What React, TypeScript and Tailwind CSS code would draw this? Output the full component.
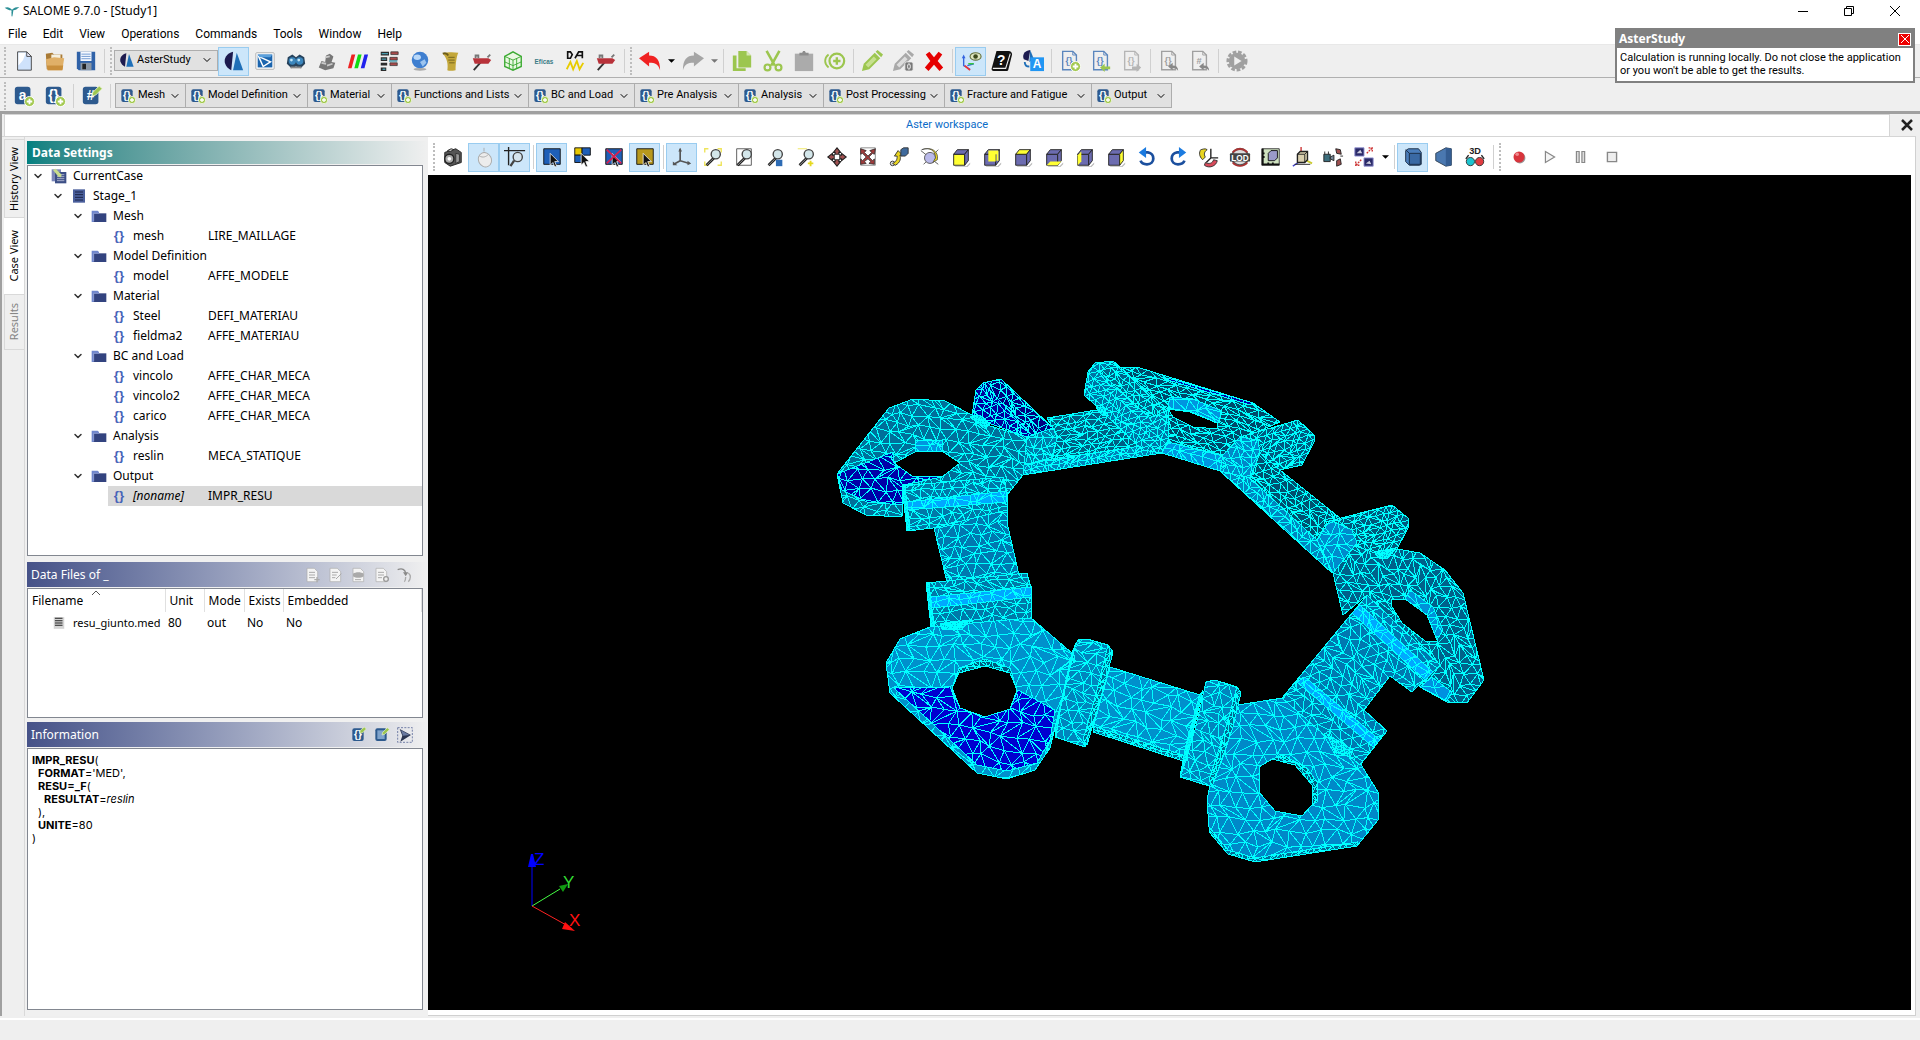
import type { ReactNode } from "react";
import { ChevronDown } from "lucide-react";

/* ---------- icons (24 x 24 drawings) ---------- */

const bold = { fontFamily: "Liberation Sans, sans-serif", fontWeight: 700 };

const glass = (
  <>
    <path d="M13 13L5 21" stroke="#222" strokeWidth="3" />
    <path d="M12 14L5 21" stroke="#999" strokeWidth="1" />
    <circle cx="15" cy="9" r="5" fill="#d3e6ea" stroke="#444" strokeWidth="1.5" />
  </>
);

const cursor = (
  <path d="M10 8v13l3-3 2 5 2-1-2-5h4z" fill="#111" stroke="#fff" strokeWidth="0.8" />
);

function cube(front: string, top: string, side: string, extra?: ReactNode) {
  return (
    <>
      <path d="M5 22h13l4-4v2l-3 3H6z" fill="#bbb" />
      <path d="M4 9h12v12H4z" fill={front} stroke="#222" />
      <path d="M4 9l4-5h12l-4 5z" fill={top} stroke="#222" />
      <path d="M16 9l4-5v12l-4 5z" fill={side} stroke="#222" />
      {extra}
    </>
  );
}

function sheet(color: string, label: string, extra: ReactNode) {
  return (
    <>
      <path d="M4 1.5h11l4 4v16H4z" fill="none" stroke={color} strokeWidth="1.5" />
      <path d="M15 1.5v4h4" fill="none" stroke={color} />
      <text x="11" y="15" fontSize="10" textAnchor="middle" fill={color} style={bold}>
        {label}
      </text>
      {extra}
    </>
  );
}

const plusBadge = (
  <>
    <circle cx="18" cy="18" r="5.5" fill="#a3c94f" stroke="#fff" />
    <path d="M18 15v6M15 18h6" stroke="#fff" strokeWidth="2" />
  </>
);

function badge(label: string, extra: ReactNode) {
  return (
    <>
      <rect x="2" y="2" width="17" height="19" rx="3" fill="#2d5a8e" />
      {label && (
        <text x="10.5" y="16" fontSize="15" textAnchor="middle" fill="#fff" style={bold}>
          {label}
        </text>
      )}
      {extra}
    </>
  );
}

const blueCube = "#6c6cb0";
const green = "#9cc64f";
const grey = "#a9a9a9";

const icons: Record<string, ReactNode> = {
  salome: (
    <>
      <path d="M1 7c5-2 8 0 11 3 3-3 6-4 11-4-3 3-6 5-9 5l-1 8-2-8C7 11 4 9 1 7z" fill="#2b8f96" />
      <path d="M12 13v7" stroke="#2b8f96" strokeWidth="1.5" />
    </>
  ),
  newFile: (
    <>
      <path d="M5 2h10l5 5v15H5z" fill="#cfe2fb" stroke="#444" />
      <path d="M6 3h8l-3 8-5 6z" fill="#fff" />
      <path d="M15 2v5h5z" fill="#eef" stroke="#444" />
    </>
  ),
  open: (
    <>
      <path d="M2 4l7-1 2 2h9v16H3z" fill="#a97a35" />
      <path d="M8 5h10v9H8z" fill="#f5f0e0" />
      <path d="M2 10l9-2 11 1-2 13H4z" fill="#e0b068" />
      <path d="M3 17h18l-1 5H4z" fill="#c98f3c" />
    </>
  ),
  save: (
    <>
      <path d="M2 2h20v20H4l-2-2z" fill="#2f62a8" />
      <path d="M6 2h12v10H6z" fill="#f4f8ff" />
      <path d="M7 4.500h10M7 7h10M7 9.500h10" stroke="#6b96d0" />
      <path d="M6 14h12v8H6z" fill="#8b97a5" />
      <path d="M8 15h4v6H8z" fill="#222" />
    </>
  ),
  aster: (
    <>
      <path d="M11 2C4 4 1 9 2 14c1 4 4 7 7 8z" fill="#1d1b4f" />
      <path d="M15 3l7 19H11z" fill="#1f6fb8" />
    </>
  ),
  paravis: (
    <>
      <rect x="2" y="3" width="20" height="18" rx="1" fill="#fff" stroke="#aaa" />
      <path d="M4 5h16v14H4z" fill="#1b64ad" />
      <path d="M5 7l13 6-8 5z" fill="none" stroke="#fff" strokeWidth="1.6" />
      <path d="M4 5h16l-2 3H6z" fill="#5ba0dc" />
    </>
  ),
  geom: (
    <>
      <path d="M3 8l5-3 4 3 4-3 5 3 1 7-5 5-5-2-5 2-5-5z" fill="#26425c" />
      <ellipse cx="8" cy="12" rx="4" ry="4" fill="#3b86bd" />
      <ellipse cx="16" cy="12" rx="4" ry="4" fill="#3b86bd" />
      <circle cx="7" cy="11" r="1.500" fill="#c2e6f8" />
      <circle cx="15" cy="11" r="1.500" fill="#c2e6f8" />
      <path d="M6 19h12" stroke="#888" strokeWidth="2" />
    </>
  ),
  shape: (
    <>
      <path d="M3 19l3-7 4 1 1-7 4-2 4 3-2 6 4 1-2 6-9 2z" fill="#777" />
      <path d="M6 14l5 1M10 8l5-1M12 17l6-2" stroke="#c9c9c9" strokeWidth="2" />
    </>
  ),
  stripes: (
    <>
      <path d="M5 5h4L5 20H1z" fill="#e22" />
      <path d="M12 5h4l-4 15H8z" fill="#1d1" />
      <path d="M19 5h4l-4 15h-4z" fill="#22e" />
    </>
  ),
  yacs: (
    <>
      <path d="M3 2h9v4H3zM3 8h7v4H3zM3 14h7v3H3zM3 19h6v4H3z" fill="#2b2b2b" />
      <path d="M14 2h8v3h-8zM13 8h8v3h-8zM13 14h8v3h-8z" fill="#a94a4a" stroke="#333" strokeWidth="0.800" />
      <path d="M4 4h7M12 12h9M4 10h5M5 21h3" stroke="#4a9cae" strokeWidth="1.500" />
    </>
  ),
  globe: (
    <>
      <circle cx="12" cy="11" r="9" fill="#3f7fd0" />
      <ellipse cx="9" cy="8" rx="4" ry="3" fill="#b9d8f8" />
      <path d="M12 13l5-3 2 4-4 4z" fill="#9cc4ef" />
      <ellipse cx="12" cy="21" rx="7" ry="1.500" fill="#aaa" />
    </>
  ),
  scroll: (
    <>
      <path d="M3 4c5-2 11-2 17-1-2 4-3 12-3 19-4 1-7 1-9 0 1-6 0-13-5-18z" fill="#c3a73a" />
      <path d="M9 8h7M9 11h7M10 14h6" stroke="#71601c" />
      <path d="M3 4c3-1 5 0 6 2" stroke="#6d5c18" fill="none" strokeWidth="2" />
    </>
  ),
  hammer: (
    <>
      <path d="M3 22l8-9" stroke="#333" strokeWidth="2" />
      <path d="M2 9h17l3 2-3 4H4z" fill="#b8323a" />
      <path d="M5 9V6h3v3M18 8l3-3" stroke="#777" strokeWidth="2" fill="none" />
    </>
  ),
  hexa: (
    <>
      <path d="M3 7l9-5 9 5v11l-9 4-9-4z" fill="#eaf8e2" stroke="#3caa32" strokeWidth="1.500" />
      <path d="M3 7l9 4 9-4M12 11v11M8 9v11M3 13l9 4 9-4M16 9v11" stroke="#3caa32" fill="none" />
    </>
  ),
  eficas: (
    <text x="12" y="15" fontSize="7" textAnchor="middle" fill="#3c7c86" style={bold}>
      Eficas
    </text>
  ),
  curves: (
    <>
      <path d="M4 9V2h3l2 3-2 4zM12 9l4-7h4v7M13 6h7" fill="none" stroke="#111" strokeWidth="1.800" />
      <path d="M3 21l4-8 3 8 4-9 3 9 4-7" stroke="#e8cc00" strokeWidth="2" fill="none" />
    </>
  ),
  undo: <path d="M0 9l11-7v4c8 0 12 5 12 16-2-6-5-8-12-8v4z" fill="#f02222" />,
  redo: <path d="M24 9L13 2v4C5 6 1 11 1 22c2-6 5-8 12-8v4z" fill="#a5a5a5" />,
  copy: (
    <>
      <path d="M2 6h4v14h10v3H2z" fill={green} />
      <path d="M8 1h9l5 5v13H8z" fill={green} />
      <path d="M17 1v5h5z" fill="#d7e8b5" />
    </>
  ),
  cut: (
    <>
      <path d="M5 1l9 16M19 1l-9 16" stroke={green} strokeWidth="2.800" />
      <circle cx="6" cy="19" r="3.200" fill="none" stroke={green} strokeWidth="2.400" />
      <circle cx="18" cy="19" r="3.200" fill="none" stroke={green} strokeWidth="2.400" />
    </>
  ),
  paste: (
    <>
      <path d="M2 4h20v19H2z" fill="#ababab" />
      <path d="M7 6V3h3l1-2h2l1 2h3v3z" fill="#8d8d8d" />
    </>
  ),
  duplicate: (
    <>
      <path d="M5 5c-5 4-5 10 0 14" stroke={green} strokeWidth="2" fill="none" />
      <circle cx="14" cy="12" r="8" fill="none" stroke={green} strokeWidth="2.400" />
      <path d="M14 8v8M10 12h8" stroke={green} strokeWidth="2.600" />
    </>
  ),
  pencil: (
    <>
      <path d="M1 23l2-8L15 3l6 6L9 21z" fill={green} />
      <path d="M16 2l2-2 6 5-2 3z" fill={green} />
      <path d="M5 16l9-9 3 3-9 9z" fill="#c7e08f" />
    </>
  ),
  pencilOff: (
    <>
      <path d="M1 23l2-8L15 3l6 6L9 21z" fill={grey} />
      <path d="M16 2l2-2 6 5-2 3z" fill={grey} />
      <path d="M5 16l9-9 3 3-9 9z" fill="#ddd" />
      <rect x="14" y="13" width="9" height="10" rx="2" fill="#777" stroke="#eee" />
      <ellipse cx="18.500" cy="18" rx="1.500" ry="3" fill="none" stroke="#fff" />
    </>
  ),
  remove: <path d="M3 5l4-3 5 6 5-6 4 3-5 7 6 7-4 4-6-7-6 7-4-4 6-7z" fill="#e60000" />,
  eyeAxis: (
    <>
      <path d="M4 8v9l7 4M8 17l7-2" stroke="#3465e0" strokeWidth="1.500" fill="none" />
      <path d="M2 9l2-4 2 4z" fill="#3465e0" />
      <path d="M5 17l6 5" stroke="#e33" strokeWidth="2" />
      <path d="M9 15h6" stroke="#3c3" strokeWidth="1.500" />
      <ellipse cx="17" cy="7" rx="6" ry="4" fill="#dde5c0" stroke="#66713c" strokeWidth="1.200" />
      <circle cx="17" cy="7" r="2.500" fill="#3d4a1c" />
    </>
  ),
  help: (
    <>
      <path d="M6 1h13c3 0 4 2 4 4l-4 16c0 1-1 2-2 2H3c-2 0-3-2-2-4z" fill="#111" />
      <path d="M2 20h14l5-16" stroke="#eee" strokeWidth="1.200" fill="none" />
      <text x="11" y="16" fontSize="15" textAnchor="middle" fill="#fff" style={bold}>
        ?
      </text>
    </>
  ),
  translate: (
    <>
      <path d="M9 0C2 1 0 6 2 10l5 2z" fill="#1d1b4f" />
      <path d="M9 0l4 10-5 3z" fill="#1f6fb8" />
      <path d="M3 13c0 4 2 5 5 5" stroke="#1f6fb8" strokeWidth="2" fill="none" />
      <rect x="9" y="8" width="15" height="15" fill="#2196f3" />
      <text x="16.500" y="20" fontSize="13" textAnchor="middle" fill="#fff" style={bold}>
        A
      </text>
    </>
  ),
  stageAdd: sheet("#5b86bd", "{}", plusBadge),
  stageImport: sheet("#5b86bd", "{}", <path d="M11 19l5-4v3h6v3h-6v3z" fill={green} />),
  stageExport: sheet("#b5b5b5", "{}", <path d="M22 19l-5-4v3h-5v3h5v3z" fill="#b5b5b5" />),
  stageBack: sheet("#a0a0a0", "{}", <path d="M11 18l5-4v3c4 0 6 2 6 6-2-3-3-3-6-3v2z" fill="#888" />),
  hashBack: sheet("#a0a0a0", "#", <path d="M11 18l5-4v3c4 0 6 2 6 6-2-3-3-3-6-3v2z" fill="#888" />),
  gear: (
    <>
      <circle cx="12" cy="12" r="10" fill="none" stroke="#a0a0a0" strokeWidth="3" strokeDasharray="4 2" />
      <circle cx="12" cy="12" r="9" fill="#a0a0a0" />
      <path d="M9 7l8 5-8 5z" fill="#eee" />
    </>
  ),
  varAdd: badge("a", plusBadge),
  cmdAdd: badge("{}", plusBadge),
  hashEdit: badge("#", <path d="M12 12l1-4 7-7 3 3-7 7z" fill={green} stroke="#e8f2cf" />),
  cmdEdit: badge("{}", <path d="M13 9l1-4 6-5 3 3-6 6z" fill={green} stroke="#e8f2cf" />),
  cmdView: badge(
    "",
    <>
      <path d="M5 5h11v13H5z" fill="#7fa3cc" />
      <path d="M12 12l1-4 7-7 3 3-7 7z" fill={green} stroke="#e8f2cf" />
    </>,
  ),
  camera: (
    <>
      <path d="M3 7l12-4 6 4v11l-12 4-6-4z" fill="#555" stroke="#222" />
      <path d="M6 5l4-2 3 1-4 2z" fill="#ccc" stroke="#222" />
      <circle cx="8" cy="14" r="5" fill="#aaa" stroke="#222" strokeWidth="1.500" />
      <circle cx="8" cy="14" r="2" fill="#fff" />
      <path d="M15 8l4 1v8l-4 2z" fill="#999" stroke="#333" />
    </>
  ),
  mouse: (
    <>
      <ellipse cx="13" cy="15" rx="7" ry="8" fill="#ececec" stroke="#aaa" transform="rotate(-25 13 15)" />
      <path d="M7 11c4 2 7 1 10-2M12 6V2" stroke="#aaa" fill="none" />
    </>
  ),
  zoomStyle: (
    <>
      <path d="M5 1v20M0 5h23" stroke="#222" strokeWidth="1.500" />
      <circle cx="15" cy="12" r="5" fill="#d5e4ee" stroke="#444" strokeWidth="1.500" />
      <path d="M11 16l-4 6" stroke="#444" strokeWidth="2.500" />
    </>
  ),
  selBlue: (
    <>
      <path d="M3 3h18v17H3z" fill="#1e5fb8" stroke="#111" />
      {cursor}
    </>
  ),
  selMix: (
    <>
      <path d="M3 2h8v8H3z" fill="#e8c800" stroke="#111" />
      <path d="M11 2h9v8h-9zM3 10h8v8H3z" fill="#1e5fb8" stroke="#111" />
      {cursor}
    </>
  ),
  selOff: (
    <>
      <path d="M3 3h18v17H3z" fill="#1e5fb8" stroke="#111" />
      {cursor}
      <path d="M4 4l16 15M20 4L4 19" stroke="#d42050" strokeWidth="2" />
    </>
  ),
  selGold: (
    <>
      <path d="M3 3h18v17H3z" fill="#b8981c" stroke="#111" />
      {cursor}
    </>
  ),
  trihedron: (
    <>
      <path d="M10 3v13l10 3M10 16l-7 4" stroke="#555" strokeWidth="1.800" fill="none" />
      <path d="M8 6l2-4 2 4zM18 16l4 3-4 2zM2 17v4h5z" fill="#555" />
    </>
  ),
  fitAll: (
    <>
      <path d="M3 7V3h4M17 3h4v4M21 17v4h-4M7 21H3v-4" fill="none" stroke="#eee45a" strokeWidth="1.500" />
      {glass}
    </>
  ),
  fitArea: (
    <>
      <path d="M4 3h16v18H4z" fill="#fff" stroke="#555" />
      {glass}
    </>
  ),
  fitSel: (
    <>
      {glass}
      <path d="M13 15h7v7h-7z" fill="#2d6bb4" />
    </>
  ),
  zoom: (
    <>
      <path d="M3 3h10" stroke="#eee45a" />
      {glass}
      <path d="M17 16v6M14 19h6" stroke="#e6d920" strokeWidth="2" />
    </>
  ),
  pan: (
    <>
      <path
        d="M12 2l4 5h-2v3h3V8l5 4-5 4v-2h-3v3h2l-4 5-4-5h2v-3H7v2l-5-4 5-4v2h3V7H8z"
        fill="#a05050"
        stroke="#222"
        strokeWidth="1.200"
      />
      <path d="M9 9h6v6H9z" fill="#fff" stroke="#222" />
    </>
  ),
  globalPan: (
    <>
      <path d="M4 2h16v19H4z" fill="#fff" stroke="#888" />
      <path d="M4 3l6 2-2 2 4 4 4-4-2-2 6-2-1 6-2-1-4 4 4 4 2-2v6l-6-1 2-2-3-3-4 3 2 2-6 1v-6l2 2 4-4-4-4-2 1z" fill="#a03c3c" stroke="#222" strokeWidth="0.800" />
    </>
  ),
  rotPoint: (
    <>
      <circle cx="5" cy="19" r="2.500" fill="#ddd" stroke="#333" />
      <path d="M8 21c6-3 6-8 5-11l3 0-5-5-4 6h3c0 4-1 6-5 8z" fill="#e8d420" stroke="#333" />
      <path d="M14 4l3-2h5v6l-3 3h-5z" fill="#3f6a9c" stroke="#333" />
    </>
  ),
  rotate: (
    <>
      <path d="M2 5l19 15M21 4L5 20" stroke="#555" />
      <circle cx="12" cy="13" r="6" fill="#b9b9ea" stroke="#555" />
      <path d="M3 4c9-3 15 1 15 9l-3 5 5-3c2-9-7-15-17-11z" fill="#e8d420" stroke="#444" strokeWidth="0.800" />
    </>
  ),
  front: cube("#ffff33", blueCube, blueCube),
  back: cube(blueCube, blueCube, blueCube, <path d="M8 5h11v11h-2V9H8z M8 9h8v8H8z" fill="#ffff33" />),
  top: cube(blueCube, "#ffff33", blueCube),
  bottom: cube(blueCube, blueCube, blueCube, <path d="M4 21l4-4h12l-4 4z" fill="#ffff33" />),
  left: cube(blueCube, blueCube, blueCube, <path d="M4 10l4-4v11l-4 4z" fill="#ffff33" />),
  right: cube(blueCube, blueCube, "#ffff33"),
  rotLeft: (
    <>
      <path d="M8 7h5c8 1 8 13-1 13-3 0-6-1-7-4" stroke="#1b4f9e" strokeWidth="3" fill="none" />
      <path d="M3 7l8-6v12z" fill="#1b7be0" />
    </>
  ),
  rotRight: (
    <>
      <path d="M16 7h-5c-8 1-8 13 1 13 3 0 6-1 7-4" stroke="#1b4f9e" strokeWidth="3" fill="none" />
      <path d="M21 7l-8-6v12z" fill="#1b7be0" />
    </>
  ),
  reset: (
    <>
      <path d="M14 3v10h8M14 13l-5 5" stroke="#222" strokeWidth="1.500" fill="none" />
      <path d="M3 4c1 0 5-2 7 0-3 2-4 5-2 8l-3 3C1 11 1 7 3 4z" fill="#e8d420" stroke="#333" />
      <path d="M8 18c4 2 8 1 9-3l4 1c-1 6-9 9-14 5z" fill="#d84a5a" stroke="#333" />
    </>
  ),
  lod: (
    <>
      <circle cx="12" cy="12" r="9" fill="#ddd" stroke="#555" strokeWidth="2" />
      <path d="M4 7c4-5 12-5 16 0M4 18c4 5 12 5 16 0" stroke="#a33" strokeWidth="2" fill="none" />
      <rect x="1" y="8" width="22" height="9" rx="1" fill="#444" />
      <text x="12" y="16" fontSize="9" textAnchor="middle" fill="#fff" style={bold}>
        LOD
      </text>
    </>
  ),
  scale: (
    <>
      <path d="M2 3h19v18H2z" fill="#cfe3c0" stroke="#333" />
      <path d="M3 3v17h18M3 8h2M3 12h2M9 20v-2M14 20v-2" stroke="#111" strokeWidth="2" fill="none" />
      <path d="M9 8l3-3h7v8l-3 3H9z" fill="#9a9ac8" stroke="#111" />
    </>
  ),
  graduated: (
    <>
      <path d="M11 7V1" stroke="#c33" strokeWidth="1.500" />
      <path d="M8 18l-6 4" stroke="#44c" strokeWidth="1.500" />
      <path d="M17 16l6 3" stroke="#cc3" strokeWidth="2" />
      <path d="M7 9l3-3h8v9l-3 3H7z" fill="#d9cfae" stroke="#222" strokeWidth="1.500" />
      <path d="M7 9h8v9M15 9l3-3M4 20h17" stroke="#222" fill="none" />
    </>
  ),
  camParams: (
    <>
      <path d="M2 9h7v8H2z" fill="#3c6d7c" stroke="#222" />
      <path d="M9 12l4-2v6l-4-2zM3 6v3M7 6v3" stroke="#222" fill="#789" />
      <path d="M15 3l5 1 1 5-5-1zM16 16l4-2 1 6-5 2zM20 11h3" fill="#a05050" stroke="#222" />
    </>
  ),
  sync: (
    <>
      <path d="M2 2h10v9H2zM12 13h10v9H12z" fill="#2a2a68" stroke="#9090d0" />
      <path d="M4 8l4-4 2 4zM14 19l4-3 2 4z" fill="#ccd" />
      <path d="M15 8l6-6m0 4V2h-4M9 15l-6 6m0-4v4h4" stroke="#c33" strokeDasharray="2 1" fill="none" strokeWidth="1.500" />
    </>
  ),
  ortho: (
    <>
      <path d="M4 5l3-2h11l3 4v13l-2 1H8l-4-4z" fill="#4a7dbb" stroke="#1a2c44" />
      <path d="M8 8h12v12H8zM4 4l4 4" fill="#3a69a4" stroke="#1a2c44" />
    </>
  ),
  persp: (
    <>
      <path d="M3 8l11-6 6 1v18l-6 1-11-6z" fill="#4a78b0" stroke="#345" />
      <path d="M14 2l6 1v18l-6 1z" fill="#345d92" />
    </>
  ),
  stereo: (
    <>
      <text x="12" y="9" fontSize="10" textAnchor="middle" fill="#222" style={bold}>
        3D
      </text>
      <path d="M2 14l3-4M22 14l-3-4" stroke="#222" strokeWidth="1.500" />
      <circle cx="7" cy="17" r="4.500" fill="#1cc4d0" stroke="#333" />
      <circle cx="17" cy="17" r="4.500" fill="#e03c40" stroke="#333" />
    </>
  ),
  record: (
    <>
      <circle cx="13" cy="13" r="6" fill="#999" />
      <circle cx="12" cy="12" r="6" fill="#d8343c" />
      <circle cx="10" cy="9" r="2" fill="#ef8a8e" />
    </>
  ),
  play: <path d="M7 6l10 6-10 6z" fill="#f4f4f4" stroke="#888" strokeWidth="1.300" />,
  pause: <path d="M7 6h3v12H7zM13 6h3v12h-3z" fill="#ddd" stroke="#888" strokeWidth="1.300" />,
  stop: <path d="M7 7h10v10H7z" fill="#eee" stroke="#888" strokeWidth="1.500" />,
  caseIcon: (
    <>
      <path d="M1 2h14v18H1z" fill="#7b86b8" />
      <path d="M6 6h17v17H6z" fill="#3c4f86" />
      <path d="M9 10h11M9 13h11M9 16h11M9 19h11" stroke="#dde" />
      <path d="M3 3l4-2 9 9-1 4-4-1z" fill="#c8dc8c" />
    </>
  ),
  stage: (
    <>
      <path d="M3 2h18v20H3z" fill="#4a5f9c" />
      <path d="M6 6h12M6 10h12M6 14h12M6 18h12" stroke="#1b2448" strokeWidth="1.500" />
    </>
  ),
  folder: (
    <>
      <path d="M1 4h9l2 2v15H1z" fill="#6f86cc" />
      <path d="M4 8h19v13H4z" fill="#33437f" />
      <path d="M4 20V8h8" stroke="#a9b8ea" fill="none" />
    </>
  ),
  braces: (
    <text x="12" y="18" fontSize="20" textAnchor="middle" fill="#4763b8" style={bold}>
      {"{}"}
    </text>
  ),
  file: (
    <>
      <path d="M3 2h18v20H3z" fill="#d4d4d4" />
      <path d="M5 4h13M5 8h13M5 12h13M5 16h13" stroke="#222" strokeWidth="1.800" />
    </>
  ),
  fileAdd: (
    <>
      <path d="M3 2h11l5 5v15H3z" fill="#f4f4f4" stroke="#aaa" />
      <path d="M6 8h9M6 12h9M6 16h9" stroke="#aaa" strokeWidth="1.500" />
      <path d="M18 15v8M14 19h8" stroke="#aaa" strokeWidth="2" />
    </>
  ),
  fileEdit: (
    <>
      <path d="M3 2h11l5 5v15H3z" fill="#f4f4f4" stroke="#aaa" />
      <path d="M6 8h9M6 12h7M6 16h5M12 18l8-8" stroke="#aaa" strokeWidth="1.500" />
    </>
  ),
  fileEye: (
    <>
      <path d="M3 2h11l5 5v15H3z" fill="#f4f4f4" stroke="#aaa" />
      <path d="M3 10c4-3 12-3 16 0v4c-4 3-12 3-16 0z" fill="#aaa" />
      <path d="M6 19h9" stroke="#aaa" strokeWidth="1.500" />
    </>
  ),
  fileDel: (
    <>
      <path d="M3 2h11l5 5v15H3z" fill="#f4f4f4" stroke="#aaa" />
      <path d="M6 8h9M6 12h9M6 16h6" stroke="#aaa" strokeWidth="1.500" />
      <circle cx="18" cy="18" r="3.500" fill="#eee" stroke="#999" strokeWidth="2" />
    </>
  ),
  goto: (
    <>
      <path d="M1 4c7-3 11 0 12 5" stroke="#8a8a8a" strokeWidth="2" fill="none" />
      <path d="M9 8h8l-4 6z" fill="#8a8a8a" />
      <path d="M13 15c0 3 0 5-2 7M17 9c4 3 4 9 0 13" stroke="#aaa" strokeWidth="2" fill="none" />
    </>
  ),
  show: (
    <>
      <path d="M1 1h22v22H1z" fill="none" stroke="#3c4f86" strokeDasharray="3 2" />
      <path d="M4 3l17 9-16 10 3-9z" fill="#2b3550" />
      <path d="M6 5l13 7-10 1z" fill="#6a7aa0" />
    </>
  ),
};

function Icon({ name, className = "size-[22px]" }: { name: string; className?: string }) {
  return (
    <svg viewBox="0 0 24 24" className={`${className} shrink-0`} aria-hidden="true">
      {icons[name]}
    </svg>
  );
}

/* ---------- toolbar parts ---------- */

function ToolButton({ icon, active = false }: { icon: string; active?: boolean }) {
  return (
    <button
      aria-label={icon}
      className={`flex h-[29px] w-[31px] shrink-0 items-center justify-center ${
        active ? "border border-[#99ccf0] bg-[#cce6fa]" : ""
      }`}
    >
      <Icon name={icon} />
    </button>
  );
}

function Handle() {
  return (
    <div className="flex w-[7px] shrink-0 justify-center">
      <div className="h-7 border-l-2 border-dotted border-[#bdbdbd]" />
    </div>
  );
}

function Sep() {
  return (
    <div className="flex w-1.5 shrink-0 justify-center">
      <div className="h-6 w-px bg-[#d0d0d0]" />
    </div>
  );
}

function Caret({ color = "text-black" }: { color?: string }) {
  return (
    <button aria-label="More" className={`flex w-3 shrink-0 justify-center ${color}`}>
      <svg viewBox="0 0 8 4" className="h-1 w-[7px]">
        <path d="M0 0h8L4 4z" fill="currentColor" />
      </svg>
    </button>
  );
}

function Tools({ items }: { items: string }) {
  return (
    <>
      {items.split(" ").map((item, i) => {
        if (item === "|") return <Sep key={i} />;
        if (item === "::") return <Handle key={i} />;
        if (item === "v") return <Caret key={i} />;
        if (item === "v-") return <Caret key={i} color="text-[#777]" />;
        if (item.startsWith("*")) return <ToolButton key={i} icon={item.slice(1)} active />;
        return <ToolButton key={i} icon={item} />;
      })}
    </>
  );
}

const commandMenus = [
  { label: "Mesh", width: "w-[71px]" },
  { label: "Model Definition", width: "w-[122px]" },
  { label: "Material", width: "w-[84px]" },
  { label: "Functions and Lists", width: "w-[137px]" },
  { label: "BC and Load", width: "w-[106px]" },
  { label: "Pre Analysis", width: "w-[104px]" },
  { label: "Analysis", width: "w-[85px]" },
  { label: "Post Processing", width: "w-[121px]" },
  { label: "Fracture and Fatigue", width: "w-[147px]" },
  { label: "Output", width: "w-[80px]" },
];

const menuItems = ["File", "Edit", "View", "Operations", "Commands", "Tools", "Window", "Help"];

/* ---------- 3D mesh ---------- */

type Patch = {
  fill: string;
  pts: string;
  hole?: string;
  cell: number;
  row?: number;
  angle?: number;
};

const patches: Patch[] = [
  // top link
  { fill: "#00486a", pts: "1120,367 1140,368 1253,403 1280,422 1245,437 1223,455 1168,442 1168,410", hole: "1168,409 1190,412 1217,423 1218,429 1193,427 1173,417", cell: 12, row: 6, angle: 17 },
  { fill: "#0000b0", pts: "1168,378 1253,403 1250,405 1168,380", cell: 20 },
  { fill: "#0095e0", pts: "1170,397 1193,399 1222,411 1218,423 1192,412 1168,408", cell: 12 },
  { fill: "#0095e0", pts: "1168,442 1223,456 1220,471 1162,453", cell: 12, angle: 15 },
  // upper left arm
  { fill: "#005f84", pts: "1047,418 1103,409 1137,437 1167,440 1162,448 1024,466 1053,455 1057,435", cell: 10, row: 6, angle: -8 },
  { fill: "#0082b8", pts: "1024,463 1100,452 1162,443 1162,453 1023,475", cell: 7, row: 6, angle: -9 },
  { fill: "#0074a6", pts: "1084,395 1088,372 1095,363 1113,361 1120,367 1168,410 1168,440 1162,453 1142,450 1135,443 1103,412", cell: 7, row: 7, angle: 42 },
  { fill: "#006288", pts: "1113,361 1120,367 1168,410 1150,418 1100,372", cell: 8, row: 6, angle: 42 },
  // right arm
  { fill: "#005070", pts: "1250,478 1260,453 1280,470 1340,518 1327,522 1317,540", cell: 10, row: 7, angle: 40 },
  { fill: "#0085c0", pts: "1220,471 1250,478 1317,540 1332,573", cell: 9, row: 8, angle: 42 },
  { fill: "#005a80", pts: "1240,437 1298,420 1314,435 1314,442 1302,465 1280,470 1260,453 1258,440", cell: 8, row: 6, angle: -18 },
  { fill: "#0088c8", pts: "1223,455 1240,437 1258,440 1260,453 1250,478 1220,471", cell: 9 },
  // right lobe
  { fill: "#00608a", pts: "1353,545 1380,552 1397,549 1420,553 1445,570 1463,593 1484,680 1467,703 1447,702 1420,687 1367,595 1343,615 1333,573", hole: "1391,599 1405,599 1427,615 1437,632 1437,641 1425,641 1402,623 1392,607", cell: 11, row: 9, angle: 62 },
  { fill: "#0090d8", pts: "1405,599 1410,590 1433,607 1443,630 1437,640 1427,615", cell: 11 },
  { fill: "#0090e0", pts: "1420,687 1432,677 1452,692 1447,701", cell: 14 },
  { fill: "#00587c", pts: "1333,520 1392,505 1408,518 1408,528 1397,549 1380,555 1353,545", cell: 8, row: 6, angle: -15 },
  { fill: "#008acc", pts: "1317,540 1330,520 1352,530 1357,543 1333,573", cell: 12 },
  // bottom right lobe and its arm
  { fill: "#0088c8", pts: "1238,705 1282,698 1313,697 1360,763 1378,792 1378,820 1357,846 1255,862 1228,852 1209,827 1207,800 1210,785 1223,747", hole: "1259,767 1272,759 1295,765 1312,785 1312,805 1302,816 1275,811 1259,792", cell: 14, row: 13 },
  { fill: "#005a80", pts: "1272,759 1283,755 1307,768 1317,782 1317,802 1312,805 1312,785 1295,765", cell: 6 },
  { fill: "#006c98", pts: "1209,827 1228,850 1255,858 1357,842 1357,846 1255,862 1228,854 1209,832", cell: 7 },
  { fill: "#0078b0", pts: "1367,595 1440,665 1412,692 1390,676 1364,710 1387,731 1360,765 1330,740 1282,698", cell: 12, row: 10, angle: 42 },
  { fill: "#00a8ff", pts: "1360,605 1433,672 1425,680 1352,613", cell: 11, row: 14, angle: 42 },
  { fill: "#00a8ff", pts: "1305,677 1380,740 1373,747 1297,682", cell: 11, row: 14, angle: 42 },
  // bottom arm
  { fill: "#0090cc", pts: "1110,667 1200,695 1183,760 1093,728", cell: 14, row: 12, angle: 17 },
  { fill: "#006a94", pts: "1093,726 1183,755 1183,761 1093,732", cell: 6, row: 5, angle: 17 },
  // bottom left lobe
  { fill: "#0090cc", pts: "930,627 972,622 1031,618 1072,653 1060,707 1050,748 1035,770 1007,779 977,773 890,693 886,663 900,639", hole: "952,688 959,673 985,666 1010,673 1017,690 1010,709 985,717 960,708", cell: 14, row: 13 },
  { fill: "#0000d0", pts: "894,688 950,687 960,708 985,717 1010,709 1018,690 1055,710 1050,740 1037,763 1007,771 977,765", cell: 14, row: 13, angle: 10 },
  { fill: "#005a80", pts: "952,688 959,668 985,659 1010,668 1017,690 1010,673 985,666 959,673", cell: 7 },
  // collars
  { fill: "#0085bd", pts: "1072,653 1078,640 1087,639 1108,645 1113,652 1103,687 1085,747 1055,737 1060,707", cell: 11, row: 10, angle: 15 },
  { fill: "#006a94", pts: "1108,645 1113,652 1103,690 1087,745 1083,740 1097,690", cell: 5, row: 7, angle: 15 },
  { fill: "#0085bd", pts: "1180,777 1195,730 1206,682 1215,680 1237,687 1241,693 1233,727 1223,757 1212,787", cell: 11, row: 10, angle: 15 },
  { fill: "#006a94", pts: "1237,687 1241,693 1233,727 1212,787 1209,780 1226,727", cell: 5, row: 7, angle: 15 },
  // upper left lobe
  { fill: "#006f9a", pts: "837,474 889,408 913,399 945,401 972,415 980,423 1027,437 1024,465 1023,475 1007,495 903,487 902,517 866,515 843,503", hole: "894,463 915,452 942,451 960,463 942,477 912,476", cell: 12, row: 10, angle: 8 },
  { fill: "#0000a8", pts: "837,474 893,452 894,463 912,476 942,477 903,485 902,505 867,502 842,490", cell: 13, row: 11 },
  { fill: "#0095e0", pts: "915,440 942,440 942,451 915,452", cell: 12 },
  { fill: "#0000a0", pts: "972,415 976,390 983,383 1001,379 1053,428 1037,437 1027,437 980,420", cell: 8, row: 7, angle: 42 },
  { fill: "#000080", pts: "983,383 1001,379 1053,428 1034,437", cell: 9, row: 7, angle: 42 },
  { fill: "#007aa8", pts: "1027,437 1053,428 1057,437 1053,457 1024,465", cell: 8 },
  // left arm
  { fill: "#0078b0", pts: "934,528 1007,508 1008,527 1019,575 947,582", cell: 12, row: 10, angle: -5 },
  { fill: "#0078a8", pts: "902,486 1003,477 1007,492 1007,510 933,528 907,531", cell: 10, row: 9, angle: -7 },
  { fill: "#00a8ff", pts: "907,502 1007,491 1006,502 907,510", cell: 11, row: 14, angle: -6 },
  { fill: "#0078a8", pts: "926,583 1027,573 1031,588 1031,618 972,623 931,627", cell: 11, row: 9, angle: -6 },
  { fill: "#00a8ff", pts: "930,597 1031,587 1031,597 932,608", cell: 11, row: 14, angle: -6 },
  // refined spots, where the elements get much smaller
  { fill: "#00b8d8", pts: "970,417 980,415 990,424 985,429", cell: 3 },
  { fill: "#00b8d8", pts: "940,624 970,620 962,629 942,629", cell: 3 },
  { fill: "#00b8d8", pts: "1096,408 1103,407 1108,415 1102,415", cell: 3 },
  { fill: "#00b8d8", pts: "1374,552 1396,548 1388,558 1380,559", cell: 3 },
  { fill: "#00a0d0", pts: "1327,734 1353,750 1350,757 1335,752", cell: 4 },
  { fill: "#00d8f0", pts: "902,486 905,486 910,530 907,531", cell: 3 },
  { fill: "#00d8f0", pts: "926,583 929,583 934,626 931,627", cell: 3 },
  { fill: "#00d8f0", pts: "1072,653 1076,643 1061,706 1056,736 1055,730", cell: 3 },
  { fill: "#00d8f0", pts: "1199,697 1203,690 1187,758 1180,777 1186,745", cell: 3 },
];

function noise(i: number, j: number, seed: number) {
  const n = Math.sin(i * 127.1 + j * 311.7 + seed * 74.7) * 43758.5453;
  return n - Math.floor(n);
}

// jittered triangle lattice that covers the patch's bounding circle
function lattice({ pts, cell, row = cell, angle = 0 }: Patch, seed: number) {
  const xy = pts.split(" ").map((p) => p.split(",").map(Number));
  const xs = xy.map((p) => p[0]);
  const ys = xy.map((p) => p[1]);
  const cx = (Math.min(...xs) + Math.max(...xs)) / 2;
  const cy = (Math.min(...ys) + Math.max(...ys)) / 2;
  const r = Math.max(...xy.map(([x, y]) => Math.hypot(x - cx, y - cy)));
  const a = (angle * Math.PI) / 180;
  const nx = Math.ceil(r / cell) + 1;
  const ny = Math.ceil(r / row) + 1;

  const node = (i: number, j: number) => {
    const u = (i + (j % 2 ? 0.5 : 0) + (noise(i, j, seed) - 0.5) * 0.5) * cell;
    const v = (j + (noise(j, i, seed + 9) - 0.5) * 0.5) * row;
    const x = cx + u * Math.cos(a) - v * Math.sin(a);
    const y = cy + u * Math.sin(a) + v * Math.cos(a);
    return `${x.toFixed(1)} ${y.toFixed(1)}`;
  };

  let d = "";
  for (let j = -ny; j <= ny; j++) {
    for (let i = -nx; i <= nx; i++) {
      const p = node(i, j);
      d += `M${p}L${node(i + 1, j)}M${p}L${node(i, j + 1)}`;
      if (noise(i, j, seed + 3) > 0.35) {
        d += j % 2 ? `M${p}L${node(i + 1, j + 1)}` : `M${node(i + 1, j)}L${node(i, j + 1)}`;
      } else {
        d += j % 2 ? `M${node(i + 1, j)}L${node(i, j + 1)}` : `M${p}L${node(i + 1, j + 1)}`;
      }
    }
  }
  return d;
}

function Viewer3D() {
  return (
    <svg viewBox="428 175 1483 835" className="h-full w-full" role="img" aria-label="Mesh view">
      {patches.map((patch, i) => {
        const outline = `M${patch.pts}Z${patch.hole ? `M${patch.hole}Z` : ""}`;
        return (
          <g key={i} shapeRendering="crispEdges">
            <clipPath id={`patch-${i}`}>
              <path d={outline} clipRule="evenodd" />
            </clipPath>
            <path d={outline} fill={patch.fill} fillRule="evenodd" />
            <path
              d={lattice(patch, i)}
              clipPath={`url(#patch-${i})`}
              stroke="#00ffff"
              fill="none"
            />
            <path d={outline} fill="none" stroke="#00ffff" />
          </g>
        );
      })}

      {/* axes */}
      <path d="M532 906v-44" stroke="#0000ff" />
      <path d="M528 867l3-13h2l3 13z" fill="#0000ff" />
      <path d="M532 906l28-17" stroke="#44ff44" />
      <path d="M559 886l9-2-5 8z" fill="#119911" />
      <path d="M532 906l36 20" stroke="#ff2222" />
      <path d="M565 922l10 9-13-2z" fill="#ff1111" />
      <g className="font-['Liberation_Sans',sans-serif] text-[17px]">
        <text x="534" y="865" fill="#0000ff">Z</text>
        <text x="563" y="888" fill="#33dd33">Y</text>
        <text x="569" y="926" fill="#ff1111">X</text>
      </g>
    </svg>
  );
}

/* ---------- left dock ---------- */

type Row = { level: number; icon: string; name: string; command?: string; selected?: boolean };

const rows: Row[] = [
  { level: 0, icon: "caseIcon", name: "CurrentCase" },
  { level: 1, icon: "stage", name: "Stage_1" },
  { level: 2, icon: "folder", name: "Mesh" },
  { level: 3, icon: "braces", name: "mesh", command: "LIRE_MAILLAGE" },
  { level: 2, icon: "folder", name: "Model Definition" },
  { level: 3, icon: "braces", name: "model", command: "AFFE_MODELE" },
  { level: 2, icon: "folder", name: "Material" },
  { level: 3, icon: "braces", name: "Steel", command: "DEFI_MATERIAU" },
  { level: 3, icon: "braces", name: "fieldma2", command: "AFFE_MATERIAU" },
  { level: 2, icon: "folder", name: "BC and Load" },
  { level: 3, icon: "braces", name: "vincolo", command: "AFFE_CHAR_MECA" },
  { level: 3, icon: "braces", name: "vincolo2", command: "AFFE_CHAR_MECA" },
  { level: 3, icon: "braces", name: "carico", command: "AFFE_CHAR_MECA" },
  { level: 2, icon: "folder", name: "Analysis" },
  { level: 3, icon: "braces", name: "reslin", command: "MECA_STATIQUE" },
  { level: 2, icon: "folder", name: "Output" },
  { level: 3, icon: "braces", name: "[noname]", command: "IMPR_RESU", selected: true },
];

const indents = ["pl-0", "pl-5", "pl-10", "pl-20"];

function TreeRow({ level, icon, name, command, selected }: Row) {
  return (
    <li className={`flex h-5 ${indents[level]}`}>
      {!command && (
        <button aria-label={`Collapse ${name}`} className="flex w-5 items-center justify-center text-[#333]">
          <ChevronDown size={12} strokeWidth={3} />
        </button>
      )}
      <div className={`flex flex-1 items-center ${selected ? "bg-[#d9d9d9]" : ""}`}>
        <div className="flex w-[22px] justify-center">
          <Icon name={icon} className="size-4" />
        </div>
        <span className={`pl-[3px] whitespace-nowrap ${command ? "w-[78px]" : ""} ${selected ? "italic" : ""}`}>
          {name}
        </span>
        {command && <span>{command}</span>}
      </div>
    </li>
  );
}

function PanelTitle({ title, tools }: { title: string; tools: string }) {
  return (
    <div className="flex h-[25px] shrink-0 items-center bg-linear-to-r from-[#465288] to-[#f0f0f0] pr-3 pl-1">
      <h2 className="flex-1 text-white">{title}</h2>
      {tools.split(" ").map((tool) => (
        <button key={tool} aria-label={tool} className="flex w-[23px] justify-center">
          <Icon name={tool} className="size-4" />
        </button>
      ))}
    </div>
  );
}

function Dock() {
  return (
    <aside className="flex w-[404px] shrink-0 flex-col border-l border-[#d9d9d9] bg-[#f0f0f0] pt-1 pl-0.5 text-[12px]">
      <h2 className="h-[23px] shrink-0 bg-linear-to-r from-[#008080] to-[#f0f0f0] pl-[5px] text-[12px] leading-[23px] font-bold text-white">
        Data Settings
      </h2>
      <ul className="mt-px mr-[5px] h-[391px] shrink-0 border border-[#828790] bg-white">
        {rows.map((row, i) => (
          <TreeRow key={i} {...row} />
        ))}
      </ul>

      <div className="mt-1.5 shrink-0">
        <PanelTitle title="Data Files of _" tools="fileAdd fileEdit fileEye fileDel goto" />
      </div>
      <div className="mt-px mr-[5px] h-[130px] shrink-0 border border-[#828790] bg-white">
        <table className="w-full table-fixed text-left">
          <thead>
            <tr className="h-[23px]">
              <th className="relative w-[137px] border-r border-[#e0e0e0] pl-1 font-normal">
                Filename
                <svg viewBox="0 0 8 4" className="absolute top-0.5 left-16 h-1 w-2">
                  <path d="M0 4l4-4 4 4" fill="none" stroke="#555" />
                </svg>
              </th>
              <th className="w-[39px] border-r border-[#e0e0e0] pl-1 font-normal">Unit</th>
              <th className="w-[40px] border-r border-[#e0e0e0] pl-1 font-normal">Mode</th>
              <th className="w-[39px] border-r border-[#e0e0e0] pl-1 font-normal">Exists</th>
              <th className="border-r border-[#e0e0e0] pl-1 font-normal">Embedded</th>
            </tr>
          </thead>
          <tbody>
            <tr className="h-[22px]">
              <td>
                <div className="flex items-center pl-5">
                  <div className="flex w-[22px] shrink-0 justify-center">
                    <Icon name="file" className="size-3.5" />
                  </div>
                  <span className="pl-[3px] text-[11px]">resu_giunto.med</span>
                </div>
              </td>
              <td className="pl-[3px]">80</td>
              <td className="pl-[3px]">out</td>
              <td className="pl-[3px]">No</td>
              <td className="pl-[3px]">No</td>
            </tr>
          </tbody>
        </table>
      </div>

      <div className="mt-1 shrink-0">
        <PanelTitle title="Information" tools="cmdEdit cmdView show" />
      </div>
      <div className="mt-px mr-[5px] mb-1.5 min-h-0 flex-1 border border-[#828790] bg-white px-1 py-[5px] font-['Inter',sans-serif] text-[11px] leading-[13px]">
        <p>
          <b>IMPR_RESU</b>(
        </p>
        <p className="pl-1.5">
          <b>FORMAT</b>='MED',
        </p>
        <p className="pl-1.5">
          <b>RESU=_F</b>(
        </p>
        <p className="pl-3">
          <b>RESULTAT</b>=<i>reslin</i>
        </p>
        <p className="pl-1.5">),</p>
        <p className="pl-1.5">
          <b>UNITE</b>=80
        </p>
        <p>)</p>
      </div>
    </aside>
  );
}

const sideTabs = [
  { label: "History View", className: "h-[79px] border-y border-l border-[#d9d9d9]" },
  { label: "Case View", className: "h-[76px] bg-white" },
  { label: "Results", className: "h-14 border-y border-l border-[#d9d9d9] text-[#838383]" },
];

/* ---------- page ---------- */

export default function App() {
  return (
    <div className="relative flex h-screen flex-col overflow-hidden bg-[#efefef] font-['Noto_Sans','Liberation_Sans',sans-serif] text-[12px] text-black">
      {/* Title bar */}
      <header className="flex h-[22px] shrink-0 items-center bg-white pl-1">
        <Icon name="salome" className="size-4" />
        <h1 className="flex-1 pl-[3px] text-[12px]">SALOME 9.7.0 - [Study1]</h1>
        <div className="flex h-full items-center pr-0.5">
          <button aria-label="Minimize" className="flex w-[46px] justify-center">
            <span className="h-px w-2.5 bg-black" />
          </button>
          <button aria-label="Restore" className="flex w-[46px] justify-center">
            <svg viewBox="0 0 10 10" className="size-2.5">
              <path d="M0.5 2.500h7v7h-7zM2.500 2.500v-2h7v7h-2" fill="none" stroke="#000" />
            </svg>
          </button>
          <button aria-label="Close" className="flex w-[46px] justify-center">
            <svg viewBox="0 0 10 10" className="size-2.5">
              <path d="M0 0l10 10M10 0L0 10" stroke="#000" />
            </svg>
          </button>
        </div>
      </header>

      {/* Menu */}
      <nav className="flex h-[23px] shrink-0 items-center gap-4 border-b border-[#e8e8e8] bg-white pt-0.5 pl-2 font-['Roboto',sans-serif]">
        {menuItems.map((item) => (
          <button key={item}>{item}</button>
        ))}
      </nav>

      {/* Main toolbar */}
      <div className="flex h-[33px] shrink-0 items-center border-b border-[#b0b0b0] pl-px">
        <Tools items=":: newFile open save | ::" />
        <button className="mb-0.5 flex h-[21px] w-[104px] items-center border border-[#adadad] bg-[#e1e1e1] pr-1 pl-1 font-['Roboto',sans-serif] text-[11px]">
          <Icon name="aster" className="size-4" />
          <span className="flex-1 pl-0.5 text-left">AsterStudy</span>
          <ChevronDown size={12} strokeWidth={2} />
        </button>
        <Tools items="*aster paravis geom shape stripes yacs globe scroll hammer hexa eficas curves hammer | ::" />
        <Tools items="undo v redo v- | copy cut paste duplicate | pencil pencilOff remove | *eyeAxis help translate | stageAdd stageImport stageExport | stageBack hashBack | gear" />
      </div>

      {/* Command toolbar */}
      <div className="flex h-[33px] shrink-0 items-center pt-0.5 pl-px">
        <Tools items=":: varAdd cmdAdd | hashEdit |" />
        <div className="ml-0.5 flex font-['Roboto',sans-serif] text-[11px]">
          {commandMenus.map((menu) => (
            <button
              key={menu.label}
              className={`${menu.width} flex h-[25px] items-center border border-l-0 border-[#adadad] bg-[#e1e1e1] pr-1 pl-1 whitespace-nowrap first:border-l`}
            >
              <Icon name="cmdAdd" className="size-4" />
              <span className="flex-1 pl-0.5 text-left">{menu.label}</span>
              <ChevronDown size={12} strokeWidth={2} />
            </button>
          ))}
        </div>
      </div>

      {/* Workspace */}
      <main className="flex min-h-0 flex-1 flex-col border-t-[3px] border-l-2 border-[#a0a0a0] pr-1">
        <div className="flex h-[23px] shrink-0 border-b border-[#d5d5d5]">
          <div className="ml-0.5 flex flex-1 items-center justify-center border border-b-0 border-[#d5d5d5] bg-white font-['Roboto',sans-serif] text-[11px] text-[#0a6cc8]">
            Aster workspace
          </div>
          <button aria-label="Close workspace" className="flex w-[26px] items-center justify-center pl-2">
            <svg viewBox="0 0 12 12" className="size-3">
              <path d="M1 1l10 10M11 1L1 11" stroke="#222" strokeWidth="2.500" />
            </svg>
          </button>
        </div>

        <div className="flex min-h-0 flex-1">
          <div className="flex w-[22px] shrink-0 flex-col pt-0.5 pl-0.5">
            {sideTabs.map((tab) => (
              <button key={tab.label} className={`flex items-center justify-center ${tab.className}`}>
                <span className="rotate-180 text-[11px] [writing-mode:vertical-rl]">{tab.label}</span>
              </button>
            ))}
          </div>

          <Dock />

          <section className="flex min-w-0 flex-1 flex-col border-r border-b border-[#d0d0d0] bg-white pr-1 pb-[5px]">
            <div className="flex h-[38px] shrink-0 items-center pt-0.5 pl-0.5">
              <Tools items=":: camera *mouse *zoomStyle | *selBlue selMix selOff *selGold | *trihedron" />
              <Tools items="fitAll fitArea fitSel zoom pan globalPan rotPoint rotate front back top bottom left right rotLeft rotRight reset lod scale graduated camParams sync v" />
              <Tools items="| *ortho persp stereo | :: record play pause stop" />
            </div>
            <div className="min-h-0 flex-1 bg-black">
              <Viewer3D />
            </div>
          </section>
        </div>
      </main>

      {/* Status bar */}
      <footer className="mt-0.5 h-[22px] shrink-0 border-t-2 border-white" />

      {/* Notification */}
      <div
        role="alert"
        className="absolute top-7 right-[5px] w-[300px] border-2 border-[#808080] bg-white"
      >
        <div className="flex h-[18px] items-center bg-[#808080] px-0.5">
          <strong className="flex-1 text-[12px] text-white">AsterStudy</strong>
          <button
            aria-label="Dismiss"
            className="flex size-[13px] items-center justify-center border border-white bg-[#ee0000]"
          >
            <svg viewBox="0 0 8 8" className="size-2">
              <path d="M0 0l8 8M8 0L0 8" stroke="#fff" />
            </svg>
          </button>
        </div>
        <p className="px-[3px] pt-[3px] pb-1 font-['Roboto',sans-serif] text-[11px] leading-[13px]">
          Calculation is running locally. Do not close the application or you won't be able to get the results.
        </p>
      </div>
    </div>
  );
}
